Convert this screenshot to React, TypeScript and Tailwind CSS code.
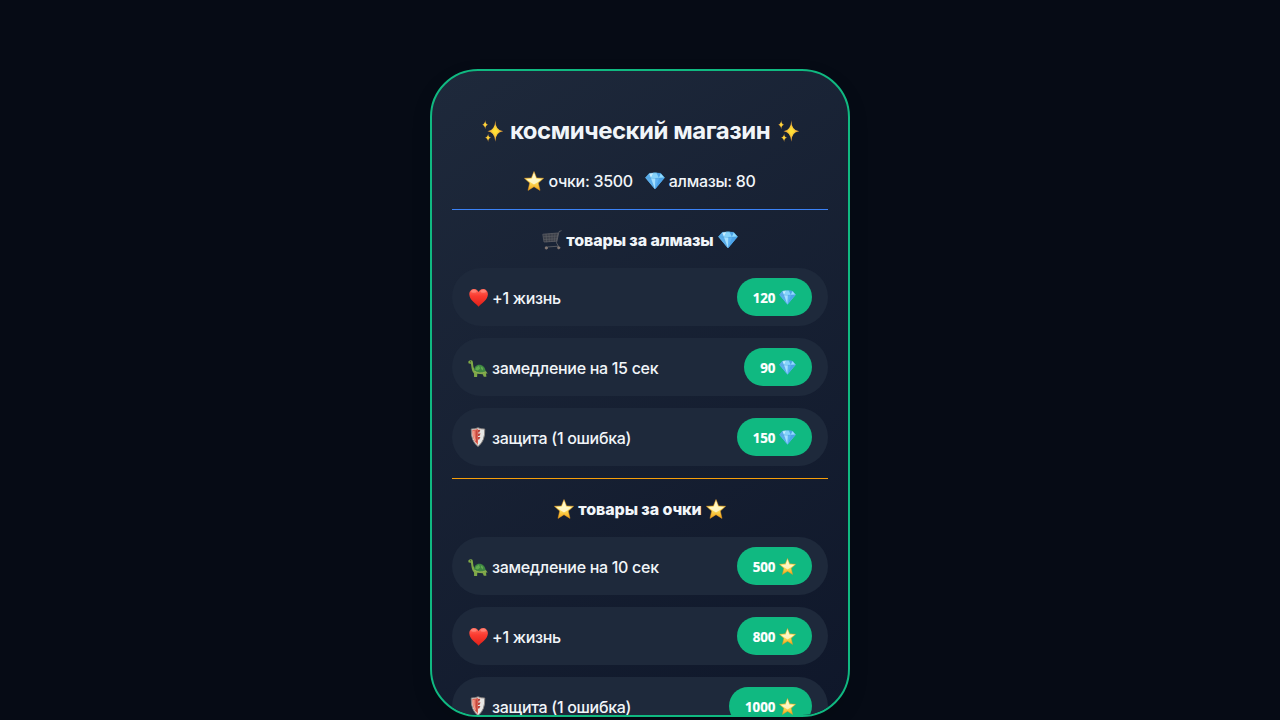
import type { ReactNode } from "react";

type IconName = "sparkles" | "star" | "gem" | "cart" | "heart" | "turtle" | "shield";

type Item = {
  icon: IconName;
  label: string;
  price: number;
};

const gemItems: Item[] = [
  { icon: "heart", label: "+1 жизнь", price: 120 },
  { icon: "turtle", label: "замедление на 15 сек", price: 90 },
  { icon: "shield", label: "защита (1 ошибка)", price: 150 },
];

const pointItems: Item[] = [
  { icon: "turtle", label: "замедление на 10 сек", price: 500 },
  { icon: "heart", label: "+1 жизнь", price: 800 },
  { icon: "shield", label: "защита (1 ошибка)", price: 1000 },
];

// All drawings share a 20x20 box
const drawings: Record<IconName, ReactNode> = {
  sparkles: (
    <g fill="url(#spark)">
      <path d="M12.8 1Q12.8 9.6 19.4 10.2Q12.8 10.8 12.8 19Q12.4 10.8 6.2 10.2Q12.4 9.6 12.8 1Z" />
      <path d="M12.8 6Q13 9.3 16 10.2Q13 11.1 12.8 14.4Q12.2 11.1 9.6 10.2Q12.2 9.3 12.8 6Z" fill="#ffdf36" />
      <path d="M4.4 .8Q4.4 4.4 6.8 4.8Q4.4 5.2 4.4 8.6Q4 5.2 1.8 4.8Q4 4.4 4.4 .8Z" />
      <path d="M6.8 12Q6.8 15.1 9.4 15.4Q6.8 15.8 6.8 19.2Q6.4 15.8 4.1 15.4Q6.4 15.1 6.8 12Z" />
    </g>
  ),
  star: (
    <>
      <path
        d="M10 .5L12.6 6.9L19.6 7.3L14.3 12L16 19.4L10 15.7L4 19.4L5.7 12L.4 7.3L7.4 6.9Z"
        fill="url(#gold)"
        stroke="#e99a22"
        strokeWidth=".5"
        strokeLinejoin="round"
      />
      <path d="M10 2.2L12 7.8L17.6 8.2L13.2 11.6L10 13.6L6.8 11.6L2.4 8.2L8 7.8Z" fill="#fffbe0" opacity=".75" />
    </>
  ),
  gem: (
    <>
      <path d="M4.2 2.4Q10 1.2 15.8 2.4L19.6 6.8L10 18.2L.4 6.8Z" fill="#6cc0f7" />
      <path d="M.4 6.8L4.2 2.4L6 7L10 18.2Z" fill="#5badea" />
      <path d="M4.2 2.4L8.6 1.8L6 7Z" fill="#c4edff" />
      <path d="M8.6 1.8H11.5L14 7H6Z" fill="#86d3fb" />
      <path d="M11.5 1.8L15.8 2.4L14 7Z" fill="#4fa3e6" />
      <path d="M15.8 2.4L19.6 6.8L14 7Z" fill="#8fdbff" />
      <path d="M6 7H10.5L10 18.2Z" fill="#a5e0ff" />
      <path d="M10.5 7H14L10 18.2Z" fill="#5fb2f3" />
      <path d="M14 7L19.6 6.8L10 18.2Z" fill="#4ba3ea" />
      <path d="M4.2 2.4Q10 1.2 15.8 2.4L19.6 6.8Q10 8.2 .4 6.8Z" fill="none" stroke="#4a9ed4" strokeWidth=".4" />
    </>
  ),
  cart: (
    <g fill="none" stroke="#65666b" strokeLinecap="round">
      <path d="M1.2 4.2L16 3L14.5 11.2L2.4 12Z" fill="#3b3f49" strokeWidth=".7" />
      <path d="M4 4.2L4.7 12M7 3.9L7.3 11.7M10 3.7V11.5M13 3.5L12.3 11.3M1.6 6.8L15.5 6M2 9.5L15 8.8" strokeWidth=".5" />
      <path d="M19.2 .8L17 1.6L14.5 12.8L16.4 16.2L3.5 17.1" strokeWidth=".8" />
      <circle cx="4.3" cy="18" r="1.2" fill="#82766f" stroke="#948780" strokeWidth=".5" />
      <circle cx="16.7" cy="17.8" r="1.2" fill="#82766f" stroke="#948780" strokeWidth=".5" />
    </g>
  ),
  heart: (
    <g transform="translate(.6 .7)">
      <path
        d="M10 19C7.6 16 .7 12.3 .7 6.6C.7 3.2 3 1.2 5.6 1.2C7.8 1.2 9.3 2.7 10 4.2C10.7 2.7 12.2 1.2 14.4 1.2C17 1.2 19.3 3.2 19.3 6.6C19.3 12.3 12.4 16 10 19Z"
        fill="url(#red)"
      />
      <ellipse cx="5.3" cy="3.7" rx="2.9" ry="1.4" fill="#ff9a8d" opacity=".6" />
      <ellipse cx="14.7" cy="3.7" rx="2.9" ry="1.4" fill="#ff9a8d" opacity=".6" />
    </g>
  ),
  turtle: (
    <>
      <path
        d="M.3 5.2C.4 3.1 3.8 2.6 4.7 4.4C5.3 6.2 4.7 9 6.4 12L17.8 14L19.7 16.4L18 16.6L18.4 19.8H15.8L14.7 17.2L9.3 16.8L9.1 19.9H6.1L6 16.4C3.4 14 3.6 9.8 2.9 6.8L.7 6.5Z"
        fill="#7fa848"
      />
      <path d="M6 13.8C6.2 9.2 9 7 12.4 7.8C15.8 8.6 17.4 11.6 17.8 14.8Q11 17.4 6 13.8Z" fill="#3d8741" />
      <path d="M8.2 10.5L10.9 8.8L12.2 11.4L9.8 13.4L7.2 12.4ZM12.8 9.2L15.2 11L14.8 13.4L13 11.8Z" fill="#62aa50" />
      <path d="M6 13.8Q11 17.4 17.8 14.8" fill="none" stroke="#a0b35c" strokeWidth=".7" />
      <circle cx="2.5" cy="4.8" r=".5" fill="#26331c" />
    </>
  ),
  shield: (
    <>
      <path
        d="M10 .8Q13 2.2 16.7 2Q17.3 14.2 10 19.5Q2.7 14.2 3.3 2Q7 2.2 10 .8Z"
        fill="#e7e7e5"
        stroke="#8b8583"
        strokeWidth="1"
      />
      <path d="M10 1.8Q7.2 3 4.2 2.9Q4 13.3 10 18Z" fill="#df6b5b" />
      <path d="M10 2.8H12.4L11.3 5.4H10ZM10 6.4H12.6L11.4 9H10ZM10 10H12.4L11.2 12.6H10Z" fill="#b9443d" />
      <path d="M8.6 3.4V15.4" stroke="#c5473d" strokeWidth="1.6" />
      <path d="M5.8 4Q5.6 10.5 7.4 13.6" fill="none" stroke="#f3a08d" strokeWidth="1.3" />
    </>
  ),
};

function Icon({ name, className }: { name: IconName; className: string }) {
  return (
    <svg viewBox="0 0 20 20" className={`shrink-0 ${className}`} aria-hidden="true">
      {drawings[name]}
    </svg>
  );
}

function Gradients() {
  return (
    <svg className="absolute size-0" aria-hidden="true">
      <defs>
        <linearGradient id="gold" x1="0" y1="0" x2="0" y2="1">
          <stop offset="0" stopColor="#fff3b0" />
          <stop offset=".5" stopColor="#ffe76a" />
          <stop offset="1" stopColor="#f3a414" />
        </linearGradient>
        <radialGradient id="spark">
          <stop offset="0" stopColor="#ffe53b" />
          <stop offset=".5" stopColor="#f5bd38" />
          <stop offset="1" stopColor="#c98438" />
        </radialGradient>
        <linearGradient id="red" x1="0" y1="0" x2="0" y2="1">
          <stop offset="0" stopColor="#ff6d5e" />
          <stop offset=".4" stopColor="#fb3b30" />
          <stop offset="1" stopColor="#df2019" />
        </linearGradient>
      </defs>
    </svg>
  );
}

function ShopItem({ item, currency }: { item: Item; currency: IconName }) {
  return (
    <div className="mb-3 flex h-[58px] items-center justify-between rounded-[40px] bg-[#1e293b] px-4">
      <div className="flex items-center gap-1">
        <Icon name={item.icon} className="size-5" />
        <span className="relative top-px">{item.label}</span>
      </div>
      <button className="flex h-[38px] items-center gap-[3.5px] rounded-[40px] bg-[#10b981] px-4 font-['Noto_Sans',sans-serif] text-[13.333px] font-bold tracking-normal text-white [-webkit-text-stroke:0.2px_white]">
        <span className="relative top-[1.5px]">{item.price}</span>
        <Icon name={currency} className="size-[17px]" />
      </button>
    </div>
  );
}

export default function App() {
  return (
    <div className="flex h-screen items-start justify-center overflow-hidden bg-[#060b15] pt-[69px] font-['Inter',sans-serif] text-base font-[450] tracking-[-0.3px] text-[#f1f5f9]">
      <Gradients />
      <div className="h-[648px] w-[420px] overflow-hidden rounded-[48px] border-2 border-[#10b981] bg-[linear-gradient(145deg,#1e293b,#0f172a)] px-5 pt-10 shadow-[0_8px_20px_rgba(0,0,0,0.12)]">
        <h2 className="flex h-10 items-center justify-center text-2xl font-bold tracking-[-0.48px]">
          <Icon name="sparkles" className="mr-1.5 size-6" />
          космический магазин
          <Icon name="sparkles" className="ml-1.5 size-6" />
        </h2>

        <div className="mt-5 flex h-5 items-center justify-center gap-3">
          <span className="flex items-center gap-1">
            <Icon name="star" className="size-5" />
            очки: 3500
          </span>
          <span className="flex items-center gap-1">
            <Icon name="gem" className="size-5" />
            алмазы: 80
          </span>
        </div>

        {/* Gem shop */}
        <div className="mt-[18px] border-t border-[#3b82f6]">
          <h3 className="flex h-[58px] items-center justify-center gap-1 pt-0.5 font-extrabold tracking-[-0.1px]">
            <Icon name="cart" className="size-5" />
            товары за алмазы
            <Icon name="gem" className="size-5" />
          </h3>
          {gemItems.map((item) => (
            <ShopItem key={item.label} item={item} currency="gem" />
          ))}
        </div>

        {/* Points shop */}
        <div className="border-t border-[#f59e0b]">
          <h3 className="flex h-[58px] items-center justify-center gap-1 pt-0.5 font-extrabold tracking-[-0.1px]">
            <Icon name="star" className="size-5" />
            товары за очки
            <Icon name="star" className="size-5" />
          </h3>
          {pointItems.map((item) => (
            <ShopItem key={item.label} item={item} currency="star" />
          ))}
        </div>
      </div>
    </div>
  );
}
